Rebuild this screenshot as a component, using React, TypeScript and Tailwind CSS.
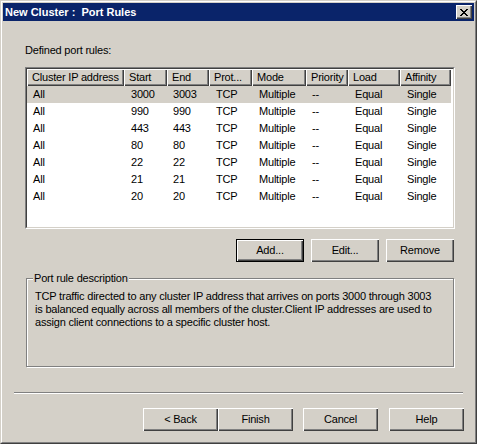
import React from 'react';

// Classic Windows dialog: "New Cluster : Port Rules"

const FONT = "font-['Liberation_Sans',Arial,sans-serif]";

const columns = [
  { label: 'Cluster IP address', w: 'w-[97px]' },
  { label: 'Start', w: 'w-[43px]' },
  { label: 'End', w: 'w-[42px]' },
  { label: 'Prot...', w: 'w-[43px]' },
  { label: 'Mode', w: 'w-[54px]' },
  { label: 'Priority', w: 'w-[42px]' },
  { label: 'Load', w: 'w-[52px]' },
  { label: 'Affinity', w: 'w-[51px]' },
];

const rules = [
  ['3000', '3003'],
  ['990', '990'],
  ['443', '443'],
  ['80', '80'],
  ['22', '22'],
  ['21', '21'],
  ['20', '20'],
];

function Button({
  label,
  width = 'w-[68px]',
  isDefault = false,
}: {
  label: string;
  width?: string;
  isDefault?: boolean;
}) {
  return (
    <button
      className={
        isDefault
          ? `${width} h-[23px] border border-black bg-[#d4d0c8] text-[11px] text-black shadow-[inset_1px_1px_0_#fff,inset_-1px_-1px_0_#404040,inset_-2px_-2px_0_#808080]`
          : `${width} h-[23px] bg-[#d4d0c8] text-[11px] text-black shadow-[inset_1px_1px_0_#fff,inset_-1px_-1px_0_#404040,inset_-2px_-2px_0_#808080]`
      }
    >
      {label}
    </button>
  );
}

function CloseButton() {
  return (
    <div className="w-[16px] h-[14px] bg-[#d4d0c8] flex items-center justify-center shadow-[inset_1px_1px_0_#fff,inset_-1px_-1px_0_#404040,inset_-2px_-2px_0_#808080]">
      <svg width="8" height="7" viewBox="0 0 8 7" shapeRendering="crispEdges">
        <path
          d="M0 0h2v1h-2zM6 0h2v1h-2zM1 1h2v1h-2zM5 1h2v1h-2zM2 2h4v1h-4zM3 3h2v1h-2zM2 4h4v1h-4zM1 5h2v1h-2zM5 5h2v1h-2zM0 6h2v1h-2zM6 6h2v1h-2z"
          fill="#000"
        />
      </svg>
    </div>
  );
}

export default function App() {
  return (
    <div className={`${FONT} w-[477px] h-[444px] border border-[#d4d0c8] border-r-[#404040] border-b-[#404040] bg-[#d4d0c8]`}>
      <div className="h-full border border-white border-r-[#808080] border-b-[#808080] p-px flex flex-col">
        {/* Title bar */}
        <div className="h-[18px] bg-[#0a246a] flex items-center justify-between pl-[2px] pr-[2px]">
          <span className="text-white font-bold text-[11px] leading-none whitespace-pre">
            New Cluster :  Port Rules
          </span>
          <CloseButton />
        </div>

        {/* Body */}
        <div className="flex flex-col pl-[22px] pt-[23px] text-[11px] leading-[13px] tracking-[-0.2px] text-black">
          <div>Defined port rules:</div>

          {/* List view */}
          <div className="mt-[10px] w-[430px] h-[162px] bg-white border border-[#808080] border-r-white border-b-white">
            <div className="h-full border border-[#404040] border-r-[#d4d0c8] border-b-[#d4d0c8]">
              <div className="flex">
                {columns.map((c) => (
                  <div
                    key={c.label}
                    className={`${c.w} h-[17px] bg-[#d4d0c8] pl-[5px] flex items-center shadow-[inset_1px_1px_0_#fff,inset_-1px_-1px_0_#404040,inset_-2px_-2px_0_#808080] whitespace-nowrap overflow-hidden`}
                  >
                    {c.label}
                  </div>
                ))}
              </div>
              {rules.map(([start, end], i) => (
                <div
                  key={start}
                  className={i === 0 ? 'flex h-[17px] items-center w-[424px] bg-[#d4d0c8]' : 'flex h-[17px] items-center w-[424px]'}
                >
                  <div className="w-[97px] pl-[6px]">All</div>
                  <div className="w-[43px] pl-[7px]">{start}</div>
                  <div className="w-[42px] pl-[6px]">{end}</div>
                  <div className="w-[43px] pl-[7px]">TCP</div>
                  <div className="w-[54px] pl-[7px]">Multiple</div>
                  <div className="w-[42px] pl-[6px]">--</div>
                  <div className="w-[52px] pl-[7px]">Equal</div>
                  <div className="w-[51px] pl-[7px]">Single</div>
                </div>
              ))}
            </div>
          </div>

          {/* List buttons */}
          <div className="mt-[10px] w-[429px] flex justify-end gap-[7px]">
            <Button label="Add..." isDefault />
            <Button label="Edit..." />
            <Button label="Remove" />
          </div>

          {/* Description group */}
          <fieldset className="mt-[10px] ml-px w-[428px] h-[95px] border border-[#808080] shadow-[inset_1px_1px_0_#fff,1px_1px_0_#fff] pl-[8px] pr-[2px]">
            <legend className="-ml-[2px] px-px bg-[#d4d0c8]">Port rule description</legend>
            <p className="pt-[5px] whitespace-nowrap">
              TCP traffic directed to any cluster IP address that arrives on ports 3000 through 3003
              <br />
              is balanced equally across all members of the cluster.Client IP addresses are used to
              <br />
              assign client connections to a specific cluster host.
            </p>
          </fieldset>

          {/* Separator */}
          <div className="mt-[25px] -ml-[11px] w-[449px] h-[2px] border-t border-[#808080] border-b border-b-white" />

          {/* Wizard buttons */}
          <div className="mt-[14px] -ml-[11px] w-[450px] flex justify-end">
            <Button label="< Back" width="w-[75px]" />
            <Button label="Finish" width="w-[75px]" />
            <div className="w-[10px]" />
            <Button label="Cancel" width="w-[75px]" />
            <div className="w-[11px]" />
            <Button label="Help" width="w-[75px]" />
          </div>
        </div>
      </div>
    </div>
  );
}
